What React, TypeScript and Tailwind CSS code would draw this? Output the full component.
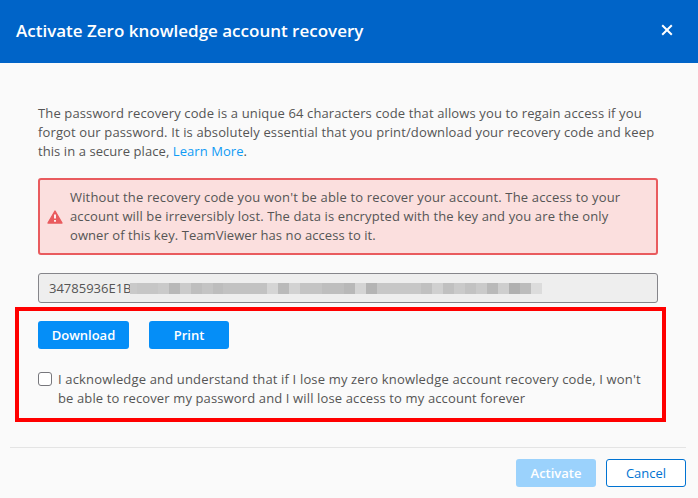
import React from "react";

const introLines = [
  {
    id: 1,
    text: "The password recovery code is a unique 64 characters code that allows you to regain access if you",
    tracking: "tracking-[0.125px]",
  },
  {
    id: 2,
    text: "forgot our password. It is absolutely essential that you print/download your recovery code and keep",
    tracking: "tracking-[0.13px]",
  },
];

const warningLines = [
  {
    id: 1,
    text: "Without the recovery code you won't be able to recover your account. The access to your",
    tracking: "tracking-[0.16px]",
  },
  {
    id: 2,
    text: "account will be irreversibly lost. The data is encrypted with the key and you are the only",
    tracking: "tracking-[0.12px]",
  },
  {
    id: 3,
    text: "owner of this key. TeamViewer has no access to it.",
    tracking: "tracking-[0.07px]",
  },
];

const acknowledgeLines = [
  {
    id: 1,
    text: "I acknowledge and understand that if I lose my zero knowledge account recovery code, I won't",
    tracking: "tracking-[0.16px]",
  },
  {
    id: 2,
    text: "be able to recover my password and I will lose access to my account forever",
    tracking: "tracking-[0.13px]",
  },
];

// Grey blocks hiding the rest of the recovery code
const maskBlocks = [
  { w: 7, color: "#c9c9c9" },
  { w: 21, color: "#c6c6c6" },
  { w: 11, color: "#cacaca" },
  { w: 11, color: "#b8b8b8" },
  { w: 11, color: "#cbcbcb" },
  { w: 11, color: "#bebebe" },
  { w: 11, color: "#c4c4c4" },
  { w: 10, color: "#bdbdbd" },
  { w: 44, color: "#c2c2c2" },
  { w: 11, color: "#d5d5d5" },
  { w: 11, color: "#bababa" },
  { w: 11, color: "#d2d2d2" },
  { w: 22, color: "#c4c4c4" },
  { w: 22, color: "#bebebe" },
  { w: 11, color: "#b8b8b8" },
  { w: 11, color: "#d4d4d4" },
  { w: 11, color: "#b4b4b4" },
  { w: 44, color: "#c7c7c7" },
  { w: 11, color: "#c0c0c0" },
  { w: 11, color: "#d0d0d0" },
  { w: 11, color: "#c0c0c0" },
  { w: 11, color: "#cacaca" },
  { w: 11, color: "#c2c2c2" },
  { w: 11, color: "#cacaca" },
  { w: 11, color: "#b9b9b9" },
  { w: 11, color: "#cecece" },
  { w: 11, color: "#b0b0b0" },
  { w: 11, color: "#bcbcbc" },
  { w: 11, color: "#dcdcdc" },
];

const App = () => {
  return (
    <div className="flex h-[498px] w-[698px] flex-col bg-[#fafafa] font-['Open_Sans','Noto_Sans',sans-serif] text-[13px] leading-[19px] text-[#555]">
      <header className="flex h-[63px] shrink-0 items-center justify-between bg-[#0064c8] pr-[25px] pl-4">
        <h1 className="pb-[3px] text-[17px] font-semibold whitespace-nowrap text-white">
          Activate Zero knowledge account recovery
        </h1>
        <button aria-label="Close" className="mb-[3px]">
          <svg width="12" height="12" viewBox="0 0 12 12" stroke="#fff" strokeWidth="2">
            <path d="M1.2 1.2 10.8 10.8M10.8 1.2 1.2 10.8" />
          </svg>
        </button>
      </header>

      <main className="h-[384px] shrink-0 pt-[41px]">
        <div className="ml-[38px] w-[620px]">
          <p className="whitespace-nowrap">
            {introLines.map((line) => (
              <span key={line.id} className={`block ${line.tracking}`}>
                {line.text}
              </span>
            ))}
            <span className="block tracking-[0.07px]">
              this in a secure place, <a className="text-[#0f9bf5]">Learn More</a>.
            </span>
          </p>

          <div className="mt-[17px] flex h-[77px] items-center rounded-[3px] border-2 border-[#e95b5e] bg-[#fbdfde] pl-[7px]">
            <svg width="16" height="14" viewBox="0 0 16 14" className="mr-[7px] shrink-0">
              <path d="M8 1 15 13H1Z" fill="#e95b5e" stroke="#e95b5e" strokeWidth="1.4" strokeLinejoin="round" />
              <path d="M8 4.5V8.6M8 10V11.8" stroke="#fff" strokeWidth="1.8" />
            </svg>
            <p className="whitespace-nowrap">
              {warningLines.map((line) => (
                <span key={line.id} className={`block ${line.tracking}`}>
                  {line.text}
                </span>
              ))}
            </p>
          </div>

          <div className="mt-[18px] flex h-[30px] items-center rounded-[3px] border border-[#85858a] bg-[#eee] pl-[10px]">
            <div className="w-[81px] shrink-0 whitespace-nowrap">34785936E1B</div>
            <div className="relative flex h-[11px]">
              {maskBlocks.map((block, i) => (
                <span key={i} style={{ width: block.w, background: block.color }} />
              ))}
            </div>
          </div>
        </div>

        <section className="mt-1 ml-[15px] h-[115px] w-[651px] border-4 border-[#f00] pt-[10px] pl-[19px]">
          <div className="flex gap-5 font-semibold text-white">
            <button className="h-7 w-[91px] rounded-[3px] bg-[#058ef7]">Download</button>
            <button className="h-7 w-20 rounded-[3px] bg-[#058ef7]">Print</button>
          </div>
          <label className="mt-[21px] flex">
            <input
              type="checkbox"
              className="mt-[2px] mr-[6px] size-[14px] shrink-0 appearance-none rounded-[3px] border border-[#77777c] bg-white"
            />
            <span className="whitespace-nowrap">
              {acknowledgeLines.map((line) => (
                <span key={line.id} className={`block ${line.tracking}`}>
                  {line.text}
                </span>
              ))}
            </span>
          </label>
        </section>
      </main>

      <footer className="mr-3 ml-[10px] flex justify-end gap-[10px] border-t border-[#e4e4e4] pt-[11px]">
        <button className="h-7 w-20 rounded-[3px] bg-[#9bd2fc] font-semibold text-white">Activate</button>
        <button className="h-7 w-20 rounded-[3px] border border-[#0073d2] bg-white text-[#0073d2]">Cancel</button>
      </footer>
    </div>
  );
};

export default App;
